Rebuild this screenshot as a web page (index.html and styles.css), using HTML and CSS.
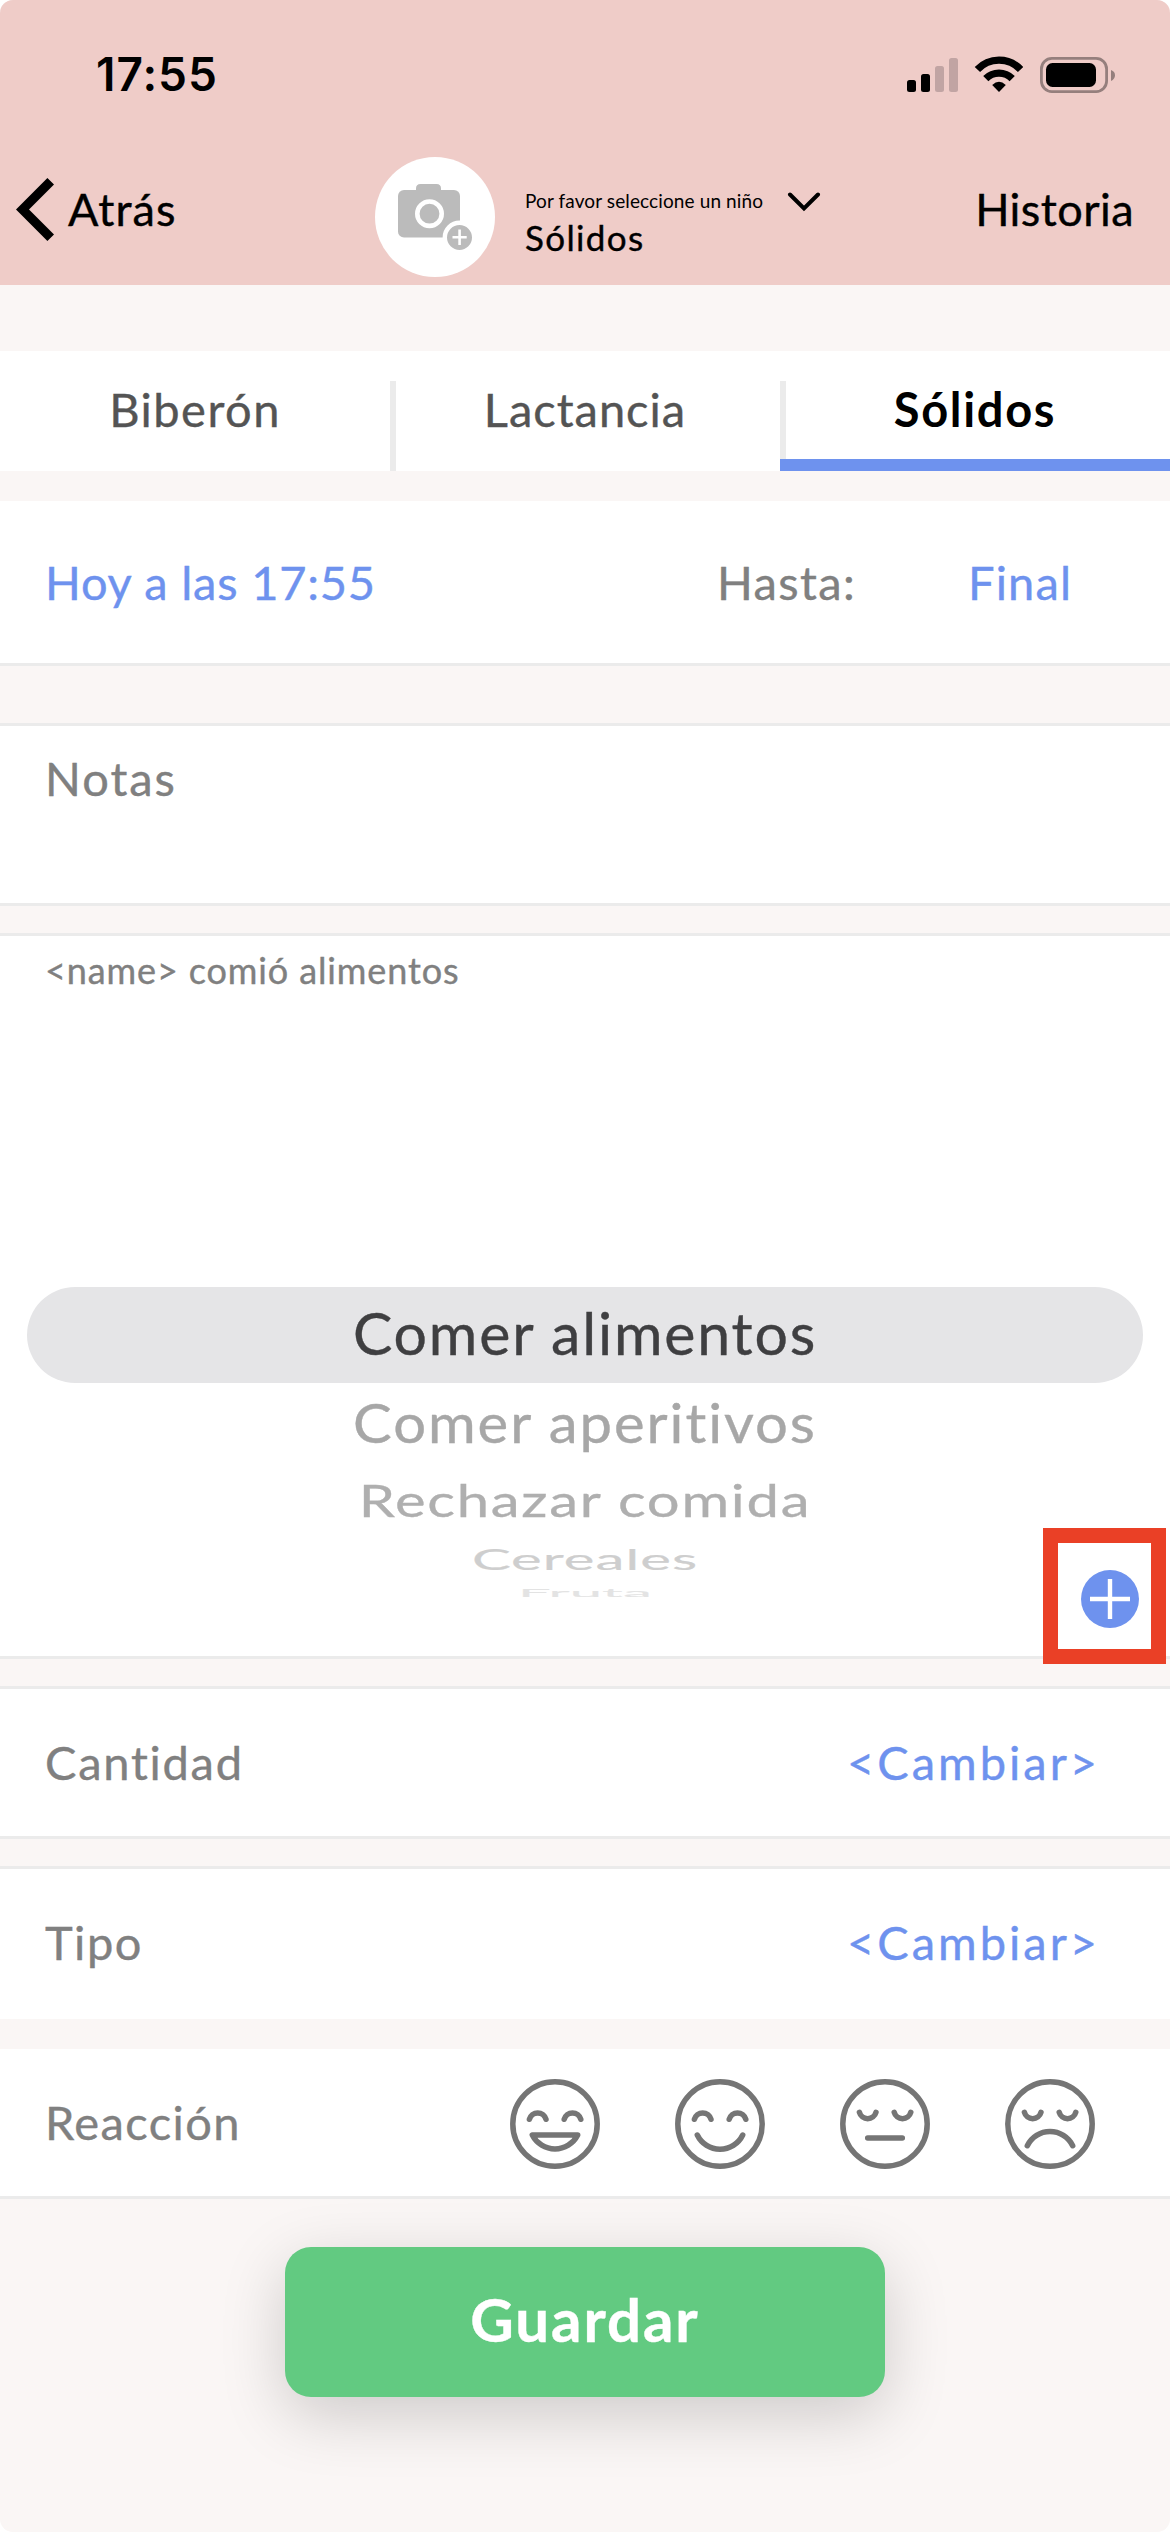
FILE: index.html
```
<!DOCTYPE html>
<html lang="es">
<head>
<meta charset="utf-8">
<title>Sólidos</title>
<link rel="stylesheet" href="styles.css">
</head>
<body>
<div class="screen">
  <header class="header">
    <div class="status">
      <span class="clock">17:55</span>
      <svg class="status-icons" viewBox="907 55 208 37" aria-hidden="true">
        <rect x="907" y="79" width="9" height="12" rx="2.5"/>
        <rect x="921" y="73" width="9" height="18" rx="2.5"/>
        <g fill="#c1a4a3"><rect x="935" y="65" width="9" height="26" rx="2.5"/><rect x="949" y="57" width="9" height="34" rx="2.5"/></g>
        <g fill="none" stroke="#000" stroke-width="7.3">
          <path d="M977.4 68.6A29.5 29.5 0 0 1 1020.6 68.6"/>
          <path d="M985.8 77.6A18.6 18.6 0 0 1 1012.2 77.6"/>
        </g>
        <path d="M999 91L992.2 84Q999 77.6 1005.8 84Z"/>
        <rect x="1041.4" y="57.4" width="65.2" height="33.2" rx="10.5" fill="none" stroke="#957f7d" stroke-width="2.8"/>
        <rect x="1046" y="62" width="50" height="24" rx="6.5"/>
        <path d="M1111 69Q1115 70.500 1115 74.300T1111 80Z" fill="#957f7d"/>
      </svg>
    </div>
    <nav class="nav">
      <a class="back">
        <svg class="back-icon" viewBox="16 178 38 63" aria-hidden="true"><path d="M47.400 178L54 184.500L29 209.500L54 234.500L47.400 241L16 209.500Z"/></svg>
        <span>Atrás</span>
      </a>
      <svg class="avatar" viewBox="375 156 120 120" aria-hidden="true">
        <circle cx="435" cy="216" r="60" fill="#fff"/>
        <g fill="#bbb">
          <rect x="398" y="189" width="62" height="47.500" rx="6"/>
          <path d="M416 190V187.500Q416 183 420.500 183H436.500Q441 183 441 187.500V190Z"/>
        </g>
        <circle cx="429.500" cy="212.700" r="12.200" fill="none" stroke="#fff" stroke-width="4.600"/>
        <circle cx="459.500" cy="236.500" r="14.700" fill="#bbb" stroke="#fff" stroke-width="4.400"/>
        <path d="M452.500 236.300H466.700M459.600 228.500V244" stroke="#fff" stroke-width="2.600" fill="none"/>
      </svg>
      <div class="title">
        <div class="child"><span>Por favor seleccione un niño</span>
          <svg class="caret" viewBox="0 0 34 20" aria-hidden="true"><path d="M3 2.500L17 16.500L31 2.500" fill="none" stroke="#000" stroke-width="4" stroke-linecap="round"/></svg>
        </div>
        <div class="page-name">Sólidos</div>
      </div>
      <a class="history">Historia</a>
    </nav>
  </header>

  <div class="tabs">
    <div class="tab t-biberon">Biberón</div>
    <div class="tab t-lactancia">Lactancia</div>
    <div class="tab active">Sólidos</div>
  </div>

  <section class="card time">
    <span class="link start">Hoy a las 17:55</span>
    <span class="until">Hasta:</span>
    <span class="link end">Final</span>
  </section>

  <section class="card notes">Notas</section>

  <section class="card food">
    <p class="caption">&lt;name&gt; comió alimentos</p>
    <div class="wheel">
      <div class="selected">Comer alimentos</div>
      <div class="item item-1"><span>Comer aperitivos</span></div>
      <div class="item item-2"><span>Rechazar comida</span></div>
      <div class="item item-3"><span>Cereales</span></div>
      <div class="item item-4"><span>Fruta</span></div>
    </div>
    <div class="highlight">
      <svg class="add" viewBox="0 0 58 58" aria-hidden="true"><circle cx="29" cy="29" r="29" fill="#6e92ee"/><path d="M9 29H49M29 9V49" stroke="#fff" stroke-width="4.400"/></svg>
    </div>
  </section>

  <section class="card amount"><span>Cantidad</span><span class="link change">&lt;Cambiar&gt;</span></section>
  <section class="card type"><span>Tipo</span><span class="link change">&lt;Cambiar&gt;</span></section>
  <section class="card reaction">
    <span>Reacción</span>
    <div class="faces">
      <svg class="face" viewBox="0 0 90 90"><circle cx="45" cy="45" r="42.200"/><path d="M19.400 40.300A8.600 8.600 0 0 1 36 40.300M54.200 40.300A8.600 8.600 0 0 1 70.800 40.300M22.300 56H67.700A25.500 25.500 0 0 1 22.300 56Z"/></svg>
      <svg class="face" viewBox="0 0 90 90"><circle cx="45" cy="45" r="42.200"/><path d="M19.400 40.300A8.600 8.600 0 0 1 36 40.300M54.200 40.300A8.600 8.600 0 0 1 70.800 40.300M22.300 56A25.200 25.200 0 0 0 67.700 56"/></svg>
      <svg class="face" viewBox="0 0 90 90"><circle cx="45" cy="45" r="42.200"/><path d="M19.400 33.300A8.600 8.600 0 0 0 36 33.300M54.200 33.300A8.600 8.600 0 0 0 70.800 33.300M27.700 59H62.300"/></svg>
      <svg class="face" viewBox="0 0 90 90"><circle cx="45" cy="45" r="42.200"/><path d="M19.400 33.300A8.600 8.600 0 0 0 36 33.300M54.200 33.300A8.600 8.600 0 0 0 70.800 33.300M22.300 66.700A25.200 25.200 0 0 1 67.700 66.700"/></svg>
    </div>
  </section>

  <button class="save">Guardar</button>
</div>
</body>
</html>
```
FILE: styles.css
```
* { box-sizing: border-box; }

body {
  margin: 0;
  background: #fff;
  font-family: Lato, "Open Sans", sans-serif;
  font-size: 47px;
  line-height: 60px;
  color: #808080;
  -webkit-text-stroke: 0.4px currentColor;
}

.screen {
  width: 1170px;
  height: 2532px;
  background: #faf6f5;
  border-radius: 13px;
  overflow: hidden;
  display: flex;
  flex-direction: column;
}

.screen > * { flex-shrink: 0; }

/* header */
.header { height: 285px; background: #efccc8; color: #000; }

.status {
  height: 148px;
  padding: 0 55px 0 96px;
  display: flex;
  align-items: center;
  justify-content: space-between;
}
.clock {
  font: 600 46px/56px Inter, sans-serif;
  letter-spacing: 1px;
  -webkit-text-stroke: 0;
}
.status-icons { width: 208px; height: 37px; }

.nav { height: 137px; padding-right: 36px; display: flex; align-items: center; }
.back {
  width: 375px;
  padding: 0 0 16px 16px;
  display: flex;
  align-items: center;
  gap: 14px;
  font-size: 45px;
  letter-spacing: 1.09px;
}
.back-icon { width: 38px; height: 63px; margin-top: 2px; }
.avatar { width: 120px; height: 120px; }
.title { margin-left: 30px; padding-top: 17px; }
.child {
  display: flex;
  align-items: center;
  gap: 24px;
  font-size: 19px;
  line-height: 24px;
  letter-spacing: 0.12px;
  -webkit-text-stroke: 0;
}
.caret { width: 34px; height: 20px; margin-top: 2px; }
.page-name { font-size: 35px; line-height: 48px; letter-spacing: 1.36px; }
.history {
  margin-left: auto;
  padding-bottom: 16px;
  font-size: 45px;
  letter-spacing: 0.43px;
}

/* tabs */
.tabs {
  margin-top: 66px;
  height: 120px;
  background: #fff;
  display: grid;
  grid-template-columns: repeat(3, 1fr);
  color: #545454;
}
.tab { padding-top: 28px; text-align: center; }
.tab + .tab {
  background: linear-gradient(#ebebeb, #ebebeb) no-repeat 0 30px / 6px 100%;
}
.t-biberon { letter-spacing: 1.48px; }
.t-lactancia { letter-spacing: 0.99px; }
.tab.active {
  color: #000;
  font-weight: 700;
  letter-spacing: 1.67px;
  border-bottom: 12px solid #6e92ee;
  -webkit-text-stroke: 0;
}

/* cards */
.card { background: #fff; border: 0 solid #ebebeb; }
.link { color: #6e92ee; }

.time {
  margin-top: 30px;
  height: 165px;
  padding-left: 45px;
  border-bottom-width: 3px;
  display: grid;
  grid-template-columns: 672px 251px auto;
  align-items: center;
}
.start { letter-spacing: 0.78px; }
.until { letter-spacing: 1.38px; }
.end { letter-spacing: 1.16px; }

.notes {
  margin-top: 57px;
  height: 183px;
  padding: 22px 45px;
  border-width: 3px 0;
  letter-spacing: 2px;
}

.food {
  position: relative;
  margin-top: 27px;
  height: 726px;
  padding-top: 14px;
  border-width: 3px 0;
}
.caption {
  margin: 0 0 297px 45px;
  font-size: 36px;
  line-height: 40px;
  letter-spacing: 0.88px;
}
.wheel { text-align: center; font-size: 58px; }
.selected {
  height: 96px;
  margin: 0 27px;
  border-radius: 48px;
  background: #e5e5e7;
  color: #3f3f41;
  font-size: 59px;
  line-height: 91px;
  letter-spacing: 1.82px;
}
.item span { display: inline-block; vertical-align: top; }
.item-1 { height: 77px; line-height: 78px; color: #a7a7a7; letter-spacing: 1.93px; }
.item-1 span { transform: scaleY(0.95); }
.item-2 { height: 80px; line-height: 80px; color: #afafaf; letter-spacing: 1.71px; }
.item-2 span { transform: scaleY(0.77); }
.item-3 { height: 37px; line-height: 37px; color: #cecece; letter-spacing: 1.08px; }
.item-3 span { transform: scaleY(0.5); }
.item-4 { height: 31px; line-height: 31px; color: #e3e3e3; letter-spacing: 0.11px; }
.item-4 span { transform: scaleY(0.21); }

.highlight {
  position: absolute;
  z-index: 1;
  top: 592px;
  right: 4px;
  width: 123px;
  height: 136px;
  border: 15px solid #ea4026;
  padding: 27px 0 0 23px;
}
.add { display: block; width: 58px; height: 58px; }

.amount, .type, .reaction {
  display: flex;
  align-items: center;
  justify-content: space-between;
}
.amount {
  margin-top: 27px;
  height: 153px;
  padding: 0 70px 1px 45px;
  border-width: 3px 0;
  letter-spacing: 1.75px;
}
.type {
  margin-top: 27px;
  height: 153px;
  padding: 0 70px 4px 45px;
  border-top-width: 3px;
  letter-spacing: 1.5px;
}
.change { letter-spacing: 3px; }
.reaction {
  margin-top: 30px;
  height: 150px;
  padding: 0 75px 0 45px;
  border-bottom-width: 3px;
  letter-spacing: 1.4px;
}
.reaction > span { padding-bottom: 1px; }
.faces { display: flex; gap: 75px; padding-top: 3px; }
.face {
  width: 90px;
  height: 90px;
  fill: none;
  stroke: #757575;
  stroke-width: 5.5px;
  stroke-linecap: round;
  stroke-linejoin: round;
}

/* primary action */
.save {
  align-self: center;
  margin-top: 48px;
  width: 600px;
  height: 150px;
  padding: 0 0 6px;
  border: 0;
  border-radius: 26px;
  background: #62ca81;
  box-shadow: 0 18px 64px rgba(0, 0, 0, 0.18);
  color: #fff;
  font: 700 60px/72px Lato, "Open Sans", sans-serif;
  letter-spacing: 1.93px;
}
```
